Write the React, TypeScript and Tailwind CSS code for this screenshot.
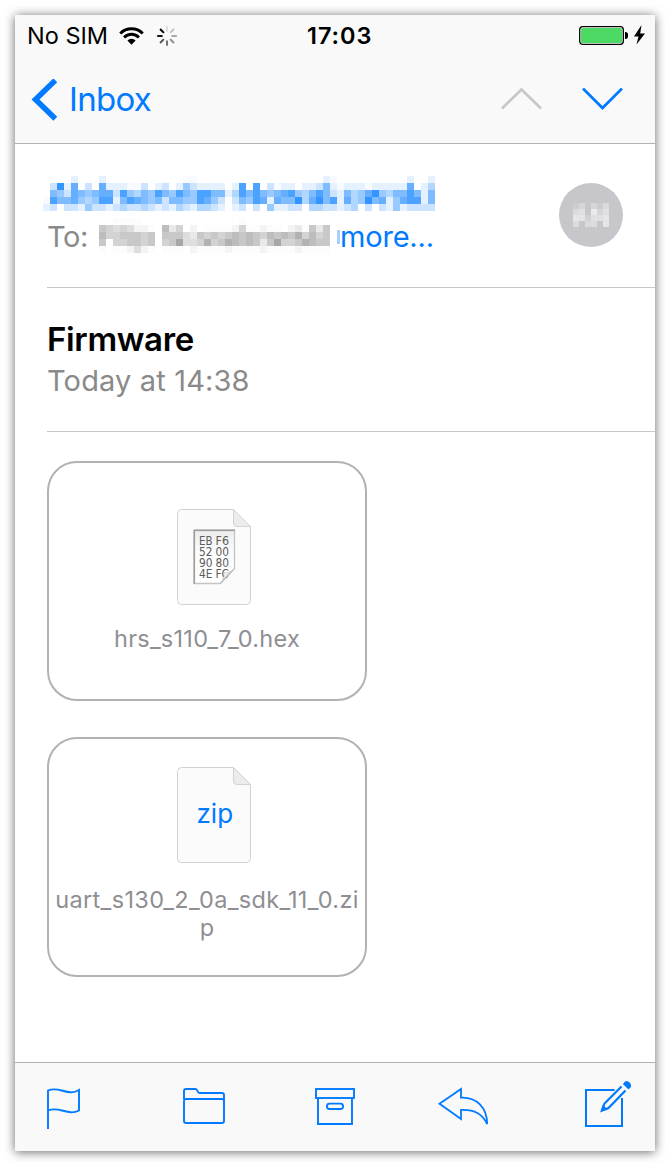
import type { ReactNode } from "react";

const senderRows = [
  "....1...1...........,,..................1,..........1..1",
  ".2816.2.6111,,2.12.1421111.17.7.2,11.11251,111,111116.13",
  ".5426545662743547547547755137575456743575215346843557515",
  ",7556434771576545255447642.25476165583685716348561467715",
  "12.22142212322321213213321.12.2.41122.3322123.2.21412222",
];

const recipientRows = [
  "..,,,,..............,............",
  "5434311,.624.1.,,,,14,,1,,.12,525",
  "64455545.555325454565654656574645",
  "5.445545.458334745765652584457655",
  ",.,,131,.,,,.1,,,,1,,,,1,,,,1,,,,",
];

const avatarRows = ["13.314", "45.735", "662556", "4.44.6"];

function Mosaic({ rows, cell, fill, step }: { rows: string[]; cell: number; fill: string; step: number }) {
  const cols = rows[1].length;
  return (
    <svg width={cols * cell} height={rows.length * cell} shapeRendering="crispEdges" fill={fill} className="block shrink-0">
      {rows.map((row, y) =>
        row.split("").map((c, x) =>
          c === "." ? null : (
            <rect key={`${x}-${y}`} x={x * cell} y={y * cell} width={cell} height={cell} opacity={c === "," ? 0.3 * step : Number(c) * step} />
          ),
        ),
      )}
    </svg>
  );
}

function Spinner() {
  const shades = [0.1, 0.22, 0.32, 0.42, 0.52, 0.65, 0.9, 1];
  return (
    <svg width="20" height="20" viewBox="-10 -10 20 20" stroke="#000" strokeWidth="2">
      {shades.map((o, i) => (
        <path key={i} d="M0-4.4V-9.8" opacity={o} transform={`rotate(${i * 45})`} />
      ))}
    </svg>
  );
}

function FileIcon({ children }: { children?: ReactNode }) {
  return (
    <svg width="74" height="96" viewBox="0 0 74 96" className="ml-[14px] block">
      <path d="M4.500.5H56.500L73.500 17.500V91.500a4 4 0 0 1-4 4H4.500a4 4 0 0 1-4-4V4.500a4 4 0 0 1 4-4z" fill="#fbfbfb" stroke="#d2d2d2" />
      <path d="M56.500.5V14a3.500 3.500 0 0 0 3.500 3.500H73.500z" fill="#ececec" stroke="#d2d2d2" />
      {children}
    </svg>
  );
}

const hexLines = [
  ["EB", "F6"],
  ["52", "00"],
  ["90", "80"],
  ["4E", "FC"],
];

function HexSheet() {
  return (
    <>
      <defs>
        <linearGradient id="sheet" x1="0" y1="0" x2="0" y2="1">
          <stop offset="0" stopColor="#ededed" />
          <stop offset=".4" stopColor="#fcfcfc" />
          <stop offset="1" stopColor="#fff" />
        </linearGradient>
        <linearGradient id="curl" x1="0" y1="0" x2="1" y2="1">
          <stop offset=".1" stopColor="#8c8c8c" />
          <stop offset=".35" stopColor="#fff" />
          <stop offset=".55" stopColor="#b5b5b5" />
        </linearGradient>
      </defs>
      <path d="M17.500 21.500H57.500V60L43.500 74.500H17.500z" fill="url(#sheet)" stroke="#c4c4c4" strokeWidth="1.300" />
      <path d="M17.200 75V21.300H58" fill="none" stroke="#9c9c9c" strokeWidth="1.500" />
      <g fill="#5c5c5c" fontSize="12" className="font-['DejaVu_Sans_Condensed','DejaVu_Sans',sans-serif]">
        {hexLines.map(([a, b], i) => (
          <g key={a} transform={`translate(0 ${35.6 + i * 11.2})`}>
            <text x="22" textLength="13.500" lengthAdjust="spacingAndGlyphs">{a}</text>
            <text x="38.500" textLength="13.500" lengthAdjust="spacingAndGlyphs">{b}</text>
          </g>
        ))}
      </g>
      <path d="M59 59L43.500 76H59z" fill="#fbfbfb" />
      <path d="M57.500 59.500L43.500 74.500C47 70 47 68 47 63.500C51 64.500 55 62.500 57.500 59.500z" fill="url(#curl)" stroke="#a8a8a8" strokeWidth=".5" />
    </>
  );
}

export default function App() {
  return (
    <div className="h-[1166px] w-[670px] bg-white p-[15px] font-['Inter',sans-serif]">
      <div className="flex h-[1136px] w-[640px] flex-col bg-white shadow-[0_1px_10px_rgba(0,0,0,0.6)]">
        <header className="h-[129px] shrink-0 border-b border-[#b2b2b2] bg-[#f9f9f9]">
          <div className="flex h-[42px] items-center pl-3 pr-[10px] text-black">
            <div className="flex w-[280px] items-center">
              <span className="w-[79px] whitespace-nowrap text-[23.500px]">No SIM</span>
              <svg width="25" height="18" viewBox="0 0 26 18" className="ml-[13px] shrink-0">
                <path d="M13 18L8.700 13.800a6 6 0 0 1 8.600 0z" fill="#000" />
                <path d="M5.300 10.500a10.700 10.700 0 0 1 15.400 0M1.300 6.300a16.500 16.500 0 0 1 23.400 0" fill="none" stroke="#000" strokeWidth="3" />
              </svg>
              <div className="ml-[13px]"><Spinner /></div>
            </div>
            <span className="text-[23.500px] font-semibold tracking-[0.950px]">17:03</span>
            <svg width="66" height="24" viewBox="0 0 66 24" className="ml-auto">
              <rect x=".7" y="2.700" width="43.600" height="17.600" rx="3" fill="#fff" stroke="#000" strokeWidth="1.300" />
              <rect x="2" y="4" width="41" height="15" rx="1.500" fill="#4cd964" />
              <path d="M46 8h1a2.500 2.500 0 0 1 2 2v3a2.500 2.500 0 0 1-2 2h-1z" />
              <path d="M62.500 1L55 12.500h4.500L57.500 20.500L66 9.500h-4.800z" />
            </svg>
          </div>
          <div className="flex h-[85px] items-center pl-4 pr-8">
            <svg width="26" height="42" viewBox="0 0 26 42" fill="none" stroke="#007aff" strokeWidth="5.500">
              <path d="M24.300 1.300L4.500 20.500L24.300 39.700" />
            </svg>
            <span className="ml-3 text-[33px] tracking-[-0.7px] text-[#007aff]">Inbox</span>
            <svg width="122" height="24" viewBox="0 0 122 24" fill="none" strokeWidth="2.700" className="ml-auto">
              <path d="M1 20.500L20.500 1.500L40 20.500" stroke="#c7c7c7" />
              <path d="M82 .500L101.500 20L121 .500" stroke="#007aff" />
            </svg>
          </div>
        </header>

        <main className="flex grow flex-col pl-8">
          <section className="flex h-36 shrink-0 justify-between border-b border-[#c8c7cc] pr-8">
            <div className="pt-8">
              <div className="-ml-1"><Mosaic rows={senderRows} cell={7} fill="#007aff" step={0.1} /></div>
              <div className="mt-[7px] flex h-[38px] items-center whitespace-nowrap text-[29px] text-[#8a8a8a]">
                <span className="w-[52px] tracking-[-0.4px]">To:</span>
                <div className="self-start"><Mosaic rows={recipientRows} cell={7} fill="#000" step={0.043} /></div>
                <span className="ml-[7px] h-[14px] w-[3px] bg-[#a6d0ff]" />
                <span className="tracking-[-0.2px] text-[#007aff]">more...</span>
              </div>
            </div>
            <div className="mt-[39px] flex size-16 items-center justify-center rounded-full bg-[#c7c6cb]">
              <Mosaic rows={avatarRows} cell={6} fill="#fff" step={0.09} />
            </div>
          </section>

          <section className="h-36 shrink-0 border-b border-[#c8c7cc] pt-[30px]">
            <h1 className="text-[33px] font-semibold leading-[42px] tracking-[-0.350px] text-black">Firmware</h1>
            <p className="text-[29px] leading-[42px] tracking-[0.150px] text-[#8a8a8a]">Today at 14:38</p>
          </section>

          <section className="flex flex-col gap-9 pt-[29px] text-[23.500px] leading-7 text-[#8e8e93]">
            <article className="flex h-60 w-80 flex-col items-center rounded-[30px] border-2 border-[#b2b2b2] pt-[46px]">
              <FileIcon><HexSheet /></FileIcon>
              <p className="mt-5 tracking-[0.250px]">hrs_s110_7_0.hex</p>
            </article>
            <article className="flex h-60 w-80 flex-col items-center rounded-[30px] border-2 border-[#b2b2b2] pt-7">
              <FileIcon>
                <text x="37.800" y="55.500" textAnchor="middle" fontSize="26" fill="#007aff">zip</text>
              </FileIcon>
              <p className="mt-[23px] whitespace-nowrap text-center tracking-[0.340px]">uart_s130_2_0a_sdk_11_0.zi<br />p</p>
            </article>
          </section>
        </main>

        <footer className="h-[89px] shrink-0 border-t border-[#b2b2b2] bg-[#f9f9f9]">
          <div className="flex h-full items-center pl-[31px]">
            <svg width="36" height="44" viewBox="0 0 36 44" fill="none" stroke="#007aff" strokeWidth="1.900" className="shrink-0">
              <path d="M2 44V5.500C13 .5 22 12 33 5V25.500C22 31.500 13 20.500 2 25.500" />
            </svg>
            <svg width="44" height="40" viewBox="0 0 44 40" fill="none" stroke="#007aff" strokeWidth="1.900" className="ml-[100px] shrink-0">
              <path d="M2 12V4a2 2 0 0 1 2-2H13.500c2.500 0 1.500 4 4 4H40a2 2 0 0 1 2 2V34a2 2 0 0 1-2 2H4a2 2 0 0 1-2-2V14a2 2 0 0 1 2-2H40a2 2 0 0 1 2 2" />
            </svg>
            <svg width="40" height="40" viewBox="0 0 40 40" fill="none" stroke="#007aff" strokeWidth="1.900" className="ml-[89px] shrink-0">
              <rect x="1" y="2" width="38" height="9" />
              <path d="M3 11V37H37V11" />
              <rect x="12" y="16.600" width="16" height="5.400" rx="2.500" />
            </svg>
            <svg width="52" height="42" viewBox="0 0 52 42" fill="none" stroke="#007aff" strokeWidth="1.800" className="ml-[82px] shrink-0">
              <path d="M2.500 17.700L24 3V11.700C39 11 50 21 50.200 38C45 28 38 23.500 24 24V33z" />
            </svg>
            <svg width="48" height="54" viewBox="0 0 48 54" fill="none" stroke="#007aff" className="ml-[95px] shrink-0">
              <path d="M30.500 10H2V46H38V18" strokeWidth="2" />
              <path d="M37.500 6.500L20.500 23.500L18 30.500L24.500 28L41.500 10.500" strokeWidth="2.200" />
              <path d="M16.500 31.500l2.200-6.700 5 4.600z" fill="#007aff" stroke="none" />
              <path d="M40 2.700c2.500-4 9.500 1.300 6.300 5.300l-2 1.200L38.800 4z" fill="#007aff" stroke="none" />
            </svg>
          </div>
        </footer>
      </div>
    </div>
  );
}
